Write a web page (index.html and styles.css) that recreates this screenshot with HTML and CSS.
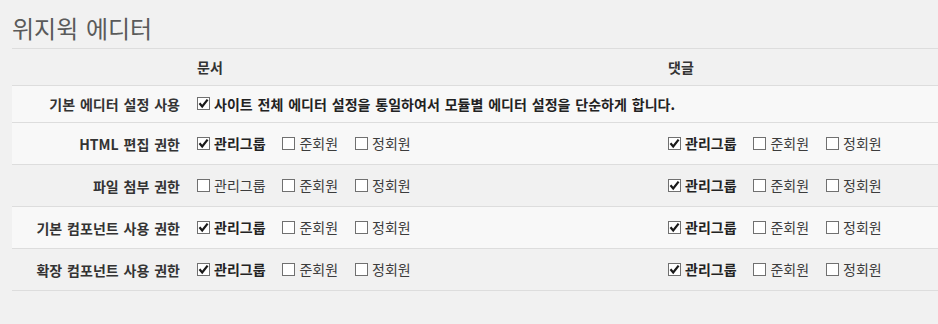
FILE: index.html
```html
<!DOCTYPE html>
<html lang="ko">
<head>
<meta charset="utf-8">
<title>위지윅 에디터</title>
<link rel="stylesheet" href="styles.css">
</head>
<body>
<div class="page">
  <h1 class="title">위지윅 에디터</h1>
  <table class="grid">
    <thead>
      <tr class="head">
        <th class="label"></th>
        <th class="col doc">문서</th>
        <th class="col cmt">댓글</th>
      </tr>
    </thead>
    <tbody>
      <tr class="row short light">
        <th class="label">기본 에디터 설정 사용</th>
        <td class="col doc" colspan="2">
          <label class="opt on"><span class="cb"><svg viewBox="0 0 13 13"><path d="M2.5 6.3 L5.2 9.5 L10.6 2.6"/></svg></span>사이트 전체 에디터 설정을 통일하여서 모듈별 에디터 설정을 단순하게 합니다.</label>
        </td>
      </tr>
      <tr class="row light">
        <th class="label">HTML 편집 권한</th>
        <td class="col doc">
          <label class="opt on"><span class="cb"><svg viewBox="0 0 13 13"><path d="M2.5 6.3 L5.2 9.5 L10.6 2.6"/></svg></span>관리그룹</label>
          <label class="opt"><span class="cb"></span>준회원</label>
          <label class="opt"><span class="cb"></span>정회원</label>
        </td>
        <td class="col cmt">
          <label class="opt on"><span class="cb"><svg viewBox="0 0 13 13"><path d="M2.5 6.3 L5.2 9.5 L10.6 2.6"/></svg></span>관리그룹</label>
          <label class="opt"><span class="cb"></span>준회원</label>
          <label class="opt"><span class="cb"></span>정회원</label>
        </td>
      </tr>
      <tr class="row dark">
        <th class="label">파일 첨부 권한</th>
        <td class="col doc">
          <label class="opt"><span class="cb"></span>관리그룹</label>
          <label class="opt"><span class="cb"></span>준회원</label>
          <label class="opt"><span class="cb"></span>정회원</label>
        </td>
        <td class="col cmt">
          <label class="opt on"><span class="cb"><svg viewBox="0 0 13 13"><path d="M2.5 6.3 L5.2 9.5 L10.6 2.6"/></svg></span>관리그룹</label>
          <label class="opt"><span class="cb"></span>준회원</label>
          <label class="opt"><span class="cb"></span>정회원</label>
        </td>
      </tr>
      <tr class="row light">
        <th class="label">기본 컴포넌트 사용 권한</th>
        <td class="col doc">
          <label class="opt on"><span class="cb"><svg viewBox="0 0 13 13"><path d="M2.5 6.3 L5.2 9.5 L10.6 2.6"/></svg></span>관리그룹</label>
          <label class="opt"><span class="cb"></span>준회원</label>
          <label class="opt"><span class="cb"></span>정회원</label>
        </td>
        <td class="col cmt">
          <label class="opt on"><span class="cb"><svg viewBox="0 0 13 13"><path d="M2.5 6.3 L5.2 9.5 L10.6 2.6"/></svg></span>관리그룹</label>
          <label class="opt"><span class="cb"></span>준회원</label>
          <label class="opt"><span class="cb"></span>정회원</label>
        </td>
      </tr>
      <tr class="row dark">
        <th class="label">확장 컴포넌트 사용 권한</th>
        <td class="col doc">
          <label class="opt on"><span class="cb"><svg viewBox="0 0 13 13"><path d="M2.5 6.3 L5.2 9.5 L10.6 2.6"/></svg></span>관리그룹</label>
          <label class="opt"><span class="cb"></span>준회원</label>
          <label class="opt"><span class="cb"></span>정회원</label>
        </td>
        <td class="col cmt">
          <label class="opt on"><span class="cb"><svg viewBox="0 0 13 13"><path d="M2.5 6.3 L5.2 9.5 L10.6 2.6"/></svg></span>관리그룹</label>
          <label class="opt"><span class="cb"></span>준회원</label>
          <label class="opt"><span class="cb"></span>정회원</label>
        </td>
      </tr>
    </tbody>
  </table>
</div>
</body>
</html>
```

FILE: styles.css
```css
html, body {
  margin: 0;
  padding: 0;
  background: #f1f1f1;
}
body {
  font-family: "Noto Sans CJK KR", "Noto Sans", sans-serif;
  font-size: 14px;
  color: #333;
  word-spacing: 1px;
}
.page {
  padding-left: 12px;
}
.title {
  margin: 0;
  height: 49px;
  box-sizing: border-box;
  padding-top: 12px;
  font-size: 24px;
  line-height: 32px;
  font-weight: 400;
  color: #5a5a5a;
  border-bottom: 1px solid #dddddd;
}
.grid {
  width: 100%;
  border-collapse: collapse;
  border-spacing: 0;
  table-layout: fixed;
}
.grid th, .grid td {
  padding: 0;
  vertical-align: middle;
  border-bottom: 1px solid #dddddd;
  text-align: left;
  white-space: nowrap;
}
.head th {
  height: 36px;
  font-weight: 700;
  color: #333;
}
.row th, .row td {
  height: 41px;
}
.row.short th, .row.short td {
  height: 36px;
}
.light {
  background: #f8f8f8;
}
.dark {
  background: #f1f1f1;
}
.grid .label {
  width: 168px;
  padding-right: 6px;
  text-align: right;
  font-weight: 700;
  color: #333;
}
.grid .col.doc {
  width: 460px;
  padding-left: 11px;
}
.grid .col.cmt {
  padding-left: 11px;
}
.opt {
  display: inline-flex;
  align-items: center;
  margin-right: 12px;
  color: #3c3c3c;
}
.opt.on {
  font-weight: 700;
  color: #222;
}
.cb {
  width: 13px;
  height: 13px;
  box-sizing: border-box;
  border: 1px solid #707070;
  background: #fff;
  margin-right: 4px;
  display: inline-flex;
}
.cb svg {
  width: 13px;
  height: 13px;
  margin: -1px;
  fill: none;
  stroke: #1a1a1a;
  stroke-width: 2.2;
}
```
